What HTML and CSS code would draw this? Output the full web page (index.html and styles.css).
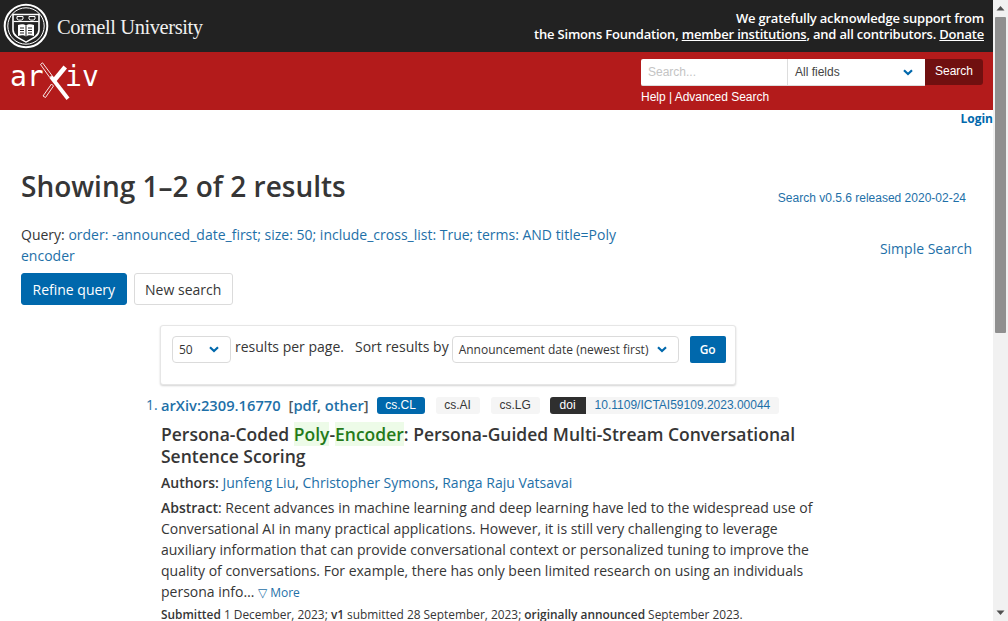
FILE: index.html
```html
<!DOCTYPE html>
<html lang="en">
<head>
<meta charset="utf-8">
<title>Search | arXiv e-print repository</title>
<link rel="stylesheet" href="styles.css">
</head>
<body>
<div class="page">
  <header class="support">
    <div class="cornell">
      <svg class="seal" width="46" height="46" viewBox="0 0 46 46" fill="none" stroke="#fff">
        <circle cx="23" cy="23" r="21.3" stroke-width="2"/>
        <circle cx="23" cy="23" r="18.2" stroke-width="1"/>
        <path d="M10 11.5H36V27C36 33 29 36 23 39C17 36 10 33 10 27Z" stroke-width="1.6" fill="#222"/>
        <path d="M10.5 18.5H35.5" stroke-width="1.2"/>
        <path d="M14 13.5H20V16C19 17.6 15 17.6 14 16Z" stroke-width="1"/>
        <path d="M26 13.5H32V16C31 17.6 27 17.6 26 16Z" stroke-width="1"/>
        <path d="M15 22C18 21 21 21 23 22.5C25 21 28 21 31 22V33C28 32 25 32 23 33.5C21 32 18 32 15 33Z" fill="#fff" stroke="none"/>
        <path d="M23 22.5V33.5M17 25H21M17 27.5H21M17 30H21M25 25H29M25 27.5H29M25 30H29" stroke="#222" stroke-width="1"/>
      </svg>
      <span class="cornell-name">Cornell University</span>
    </div>
    <div class="thanks">
      <div>We gratefully acknowledge support from</div>
      <div>the Simons Foundation, <a href="#">member institutions</a>, and all contributors. <a href="#">Donate</a></div>
    </div>
  </header>

  <div class="brand">
    <div class="logo">
      <span class="logo-ar">ar</span>
      <svg class="logo-x" width="32" height="42" viewBox="40 60 32 42" fill="none" stroke="#fff">
        <path d="M40.500 64.500L42.500 62.800L52 75.500L49.800 77.500Z" stroke-width="0.9"/>
        <path d="M63.500 65.500L67 68.500L55 83L51.500 80Z" fill="#fff" stroke="none"/>
        <path d="M49.500 78L52.500 75.500L69.500 97.500L66.500 100Z" fill="#fff" stroke="none"/>
        <path d="M51.500 84L53.500 86L45.500 97.500L43 96Z" stroke-width="0.9"/>
      </svg>
      <span class="logo-iv">iv</span>
    </div>
    <div class="search-box">
      <div class="search-row">
        <input class="search-input" type="text" placeholder="Search...">
        <div class="field-select"><span>All fields</span>
          <svg class="chev" width="10" height="7" viewBox="0 0 10 7" fill="none" stroke="#0068ac" stroke-width="2.200"><path d="M1 1.200L5 5L9 1.200"/></svg>
        </div>
        <button class="search-btn" type="button">Search</button>
      </div>
      <div class="search-links"><a href="#">Help</a> | <a href="#">Advanced Search</a></div>
    </div>
  </div>

  <div class="login-row"><a href="#">Login</a></div>

  <main class="content">
    <div class="title-row">
      <h1>Showing 1–2 of 2 results</h1>
      <a class="version" href="#">Search v0.5.6 released 2020-02-24</a>
    </div>

    <div class="query-row">
      <div class="query-col">
        <p class="query">Query: <a href="#">order: -announced_date_first; size: 50; include_cross_list: True; terms: AND title=Poly encoder</a></p>
        <div class="query-buttons">
          <a class="btn btn-primary" href="#">Refine query</a>
          <a class="btn btn-plain" href="#">New search</a>
        </div>
      </div>
      <a class="simple" href="#">Simple Search</a>
    </div>

    <div class="sort-box">
      <div class="select small-select"><span>50</span>
        <svg class="chev" width="10" height="7" viewBox="0 0 10 7" fill="none" stroke="#0068ac" stroke-width="2.200"><path d="M1 1.200L5 5L9 1.200"/></svg>
      </div>
      <span class="sort-label first">results per page.</span>
      <span class="sort-label second">Sort results by</span>
      <div class="select date-select"><span>Announcement date (newest first)</span>
        <svg class="chev" width="10" height="7" viewBox="0 0 10 7" fill="none" stroke="#0068ac" stroke-width="2.200"><path d="M1 1.200L5 5L9 1.200"/></svg>
      </div>
      <button class="go" type="button">Go</button>
    </div>

    <ol class="results">
      <li class="result">
        <div class="result-head">
          <span class="result-num">1.</span>
          <a class="arxiv-id" href="#">arXiv:2309.16770</a>
          <span class="formats">[<a href="#">pdf</a>, <a href="#">other</a>]</span>
          <span class="tag tag-primary">cs.CL</span>
          <span class="tag tag-grey">cs.AI</span>
          <span class="tag tag-grey">cs.LG</span>
          <span class="doi"><span class="doi-label">doi</span><a class="doi-value" href="#">10.1109/ICTAI59109.2023.00044</a></span>
        </div>
        <h2 class="result-title">Persona-Coded <mark>Poly</mark>-<mark>Encoder</mark>: Persona-Guided Multi-Stream Conversational Sentence Scoring</h2>
        <p class="authors"><strong>Authors:</strong> <a href="#">Junfeng Liu</a>, <a href="#">Christopher Symons</a>, <a href="#">Ranga Raju Vatsavai</a></p>
        <p class="abstract"><strong>Abstract</strong>: Recent advances in machine learning and deep learning have led to the widespread use of Conversational AI in many practical applications. However, it is still very challenging to leverage auxiliary information that can provide conversational context or personalized tuning to improve the quality of conversations. For example, there has only been limited research on using an individuals persona info&hellip; <a class="more" href="#">▽ More</a></p>
        <p class="submitted"><strong>Submitted</strong> 1 December, 2023; <strong>v1</strong> submitted 28 September, 2023; <strong>originally announced</strong> September 2023.</p>
      </li>
    </ol>
  </main>
</div>

<div class="scrollbar">
  <svg class="arrow" width="15" height="17" viewBox="0 0 15 17"><path d="M3.500 10.500H11.500L7.500 6Z" fill="#505050"/></svg>
  <div class="track"><div class="thumb"></div></div>
  <svg class="arrow" width="15" height="17" viewBox="0 0 15 17"><path d="M3.500 6.500H11.500L7.500 11Z" fill="#505050"/></svg>
</div>
</body>
</html>
```
FILE: styles.css
```css
* { box-sizing: border-box; }
html, body { margin: 0; height: 621px; overflow: hidden; background: #fff; }
body { font-family: "Open Sans", "Liberation Sans", sans-serif; font-size: 14px; color: #363636; }
a { color: #1e70a8; text-decoration: none; }
p, h1, h2, ol { margin: 0; padding: 0; }

.page { width: 993px; height: 621px; overflow: hidden; }

.support { height: 52px; background: #222; display: flex; justify-content: space-between; color: #fff; }
.cornell { display: flex; align-items: center; padding-left: 3px; }
.seal { display: block; }
.cornell-name { font-family: "Liberation Serif", serif; font-size: 20.500px; color: #f0f0f0; margin-left: 8px; letter-spacing: -0.420px; position: relative; top: 1px; }
.thanks { text-align: right; font-weight: 600; font-size: 13px; line-height: 16px; padding: 10px 9px 0 0; color: #fff; letter-spacing: -0.200px; }
.thanks a { color: #fff; text-decoration: underline; }

.brand { height: 58px; background: #b31b1b; display: flex; justify-content: space-between; }
.logo { display: flex; align-items: flex-start; padding: 5px 0 0 10px; color: #fff; height: 58px; }
.logo-ar, .logo-iv { font-family: "DejaVu Sans Mono", monospace; font-size: 28px; line-height: 40px; font-weight: 400; }
.logo-x { margin: 3px -7px 0 -3.700px; display: block; flex: none; }

.search-box { padding: 7px 10px 0 0; width: 352px; }
.search-row { display: flex; height: 27px; font-family: "Liberation Sans", Arial, sans-serif; font-size: 12px; }
.search-input { width: 147px; height: 27px; border: 0; border-bottom: 1px solid #ddd; border-right: 1px solid #ddd; border-radius: 2px 0 0 2px; padding: 0 7px; font: 12px "Liberation Sans", Arial, sans-serif; background: #fff; }
.search-input::placeholder { color: #c4c4c4; opacity: 1; }
.field-select { width: 137px; height: 27px; background: #fff; border-bottom: 1px solid #ddd; display: flex; align-items: center; justify-content: space-between; padding: 0 12px 0 7px; color: #444; }
.search-btn { width: 58px; height: 26px; background: #701010; color: #fff; border: 0; border-radius: 0 3px 3px 0; font: 12px "Liberation Sans", Arial, sans-serif; padding: 0 0 2px; }
.search-links { font-family: "Liberation Sans", Arial, sans-serif; font-size: 12px; color: #fff; line-height: 14px; margin-top: 4px; letter-spacing: -0.020px; }
.search-links a { color: #fff; }

.login-row { height: 18px; text-align: right; font-size: 12px; font-weight: 700; line-height: 18px; }
.login-row a { color: #0068ac; }

.content { padding: 0 21px; }
.title-row { display: flex; justify-content: space-between; align-items: flex-start; height: 83px; padding-top: 37px; }
h1 { font-size: 28px; font-weight: 600; line-height: 36px; color: #363636; margin-top: 3px; }
.version { font-family: "Liberation Sans", Arial, sans-serif; font-size: 12px; line-height: 14px; margin-top: 26px; margin-right: 6px; color: #1e70a8; }

.query-row { display: flex; justify-content: space-between; align-items: flex-start; height: 114px; padding-top: 13px; }
.query-col { width: 610px; }
.query { font-size: 14px; line-height: 21px; color: #363636; }
.simple { margin-top: 15px; font-size: 14px; line-height: 20px; }
.query-buttons { display: flex; gap: 7px; margin-top: 7px; }
.btn { height: 32px; display: flex; align-items: center; padding: 0 10.500px; border-radius: 3px; font-size: 14px; }
.btn-primary { background: #0068ac; color: #fff; border: 1px solid #0068ac; }
.btn-plain { background: #fff; color: #363636; border: 1px solid #dbdbdb; }

.sort-box { margin-left: 139px; width: 576px; height: 60px; background: #fff; border: 1px solid #e6e6e6; border-radius: 3px; box-shadow: 0 1px 2px rgba(10,10,10,.18); display: flex; align-items: flex-start; padding: 10px 10px 0 11px; }
.select { height: 27px; flex: none; background: #fff; border: 1px solid #dbdbdb; border-radius: 4px; display: flex; align-items: center; justify-content: space-between; font-size: 12px; color: #363636; padding: 0 11px 0 6px; }
.small-select { width: 59px; }
.date-select { width: 227px; }
.sort-label { font-size: 14px; line-height: 22px; color: #363636; white-space: nowrap; flex: none; }
.sort-label.first { margin-left: 4px; }
.sort-label.second { margin-left: 11px; margin-right: 3px; }
.go { width: 36px; height: 27px; flex: none; margin-left: 11px; background: #0068ac; color: #fff; border: 0; border-radius: 2px; font: 600 12px "Open Sans", sans-serif; padding: 0; }

.results { list-style: none; margin-top: 7px; padding-left: 140px; width: 815px; position: relative; }
.result { position: relative; }
.result-head { display: flex; align-items: center; height: 26px; font-size: 14.700px; font-weight: 600; }
.result-num { position: absolute; left: -15px; top: 3px; color: #1e70a8; font-size: 14px; font-weight: 400; line-height: 20px; }
.arxiv-id { color: #1e70a8; }
.formats { margin-left: 8px; color: #555; }
.tag { font-family: "Liberation Sans", Arial, sans-serif; font-weight: 400; font-size: 12px; height: 17px; line-height: 17px; border-radius: 3px; margin-left: 8px; text-align: center; display: block; }
.tag-primary { background: #0068ac; color: #fff; width: 48px; }
.tag-grey { background: #f5f5f5; color: #363636; width: 44px; margin-left: 11px; }
.tag-grey + .tag-grey { width: 49px; }
.doi { display: flex; margin-left: 10px; height: 17px; background: #f5f5f5; border-radius: 3px; font-family: "Liberation Sans", Arial, sans-serif; font-size: 12px; font-weight: 400; line-height: 17px; }
.doi-label { background: #2f2f2f; color: #fff; width: 36px; text-align: center; border-radius: 3px 0 0 3px; }
.doi-value { padding: 0 9px; color: #1e70a8; }

.result-title { font-size: 17.500px; font-weight: 600; line-height: 22px; color: #363636; margin-top: 5px; }
mark { background: #edfbe8; color: #257a1a; }
.authors { font-size: 14px; line-height: 21px; margin-top: 5px; color: #363636; }
.authors strong { font-weight: 600; }
.abstract { font-size: 14px; line-height: 21px; margin-top: 4px; color: #363636; width: 660px; }
.abstract strong { font-weight: 600; }
.more { font-size: 12px; }
.submitted { font-size: 11.900px; line-height: 18px; margin-top: 2px; color: #363636; }
.submitted strong { font-weight: 600; }

.scrollbar { position: fixed; top: 0; right: 0; width: 15px; height: 621px; background: #f1f1f1; display: flex; flex-direction: column; }
.arrow { display: block; flex: none; }
.track { flex: 1; }
.thumb { width: 11px; margin-left: 2px; height: 316px; background: #8f8f8f; border-radius: 1px; }
```
